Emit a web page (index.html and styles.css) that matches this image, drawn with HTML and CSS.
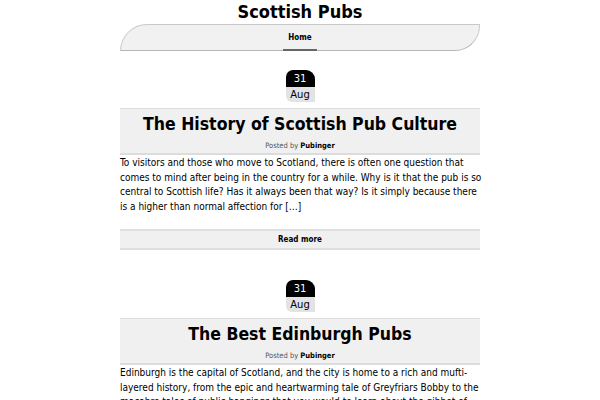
FILE: index.html
```html
<!DOCTYPE html>
<html lang="en">
<head>
<meta charset="utf-8">
<title>Scottish Pubs</title>
<link rel="stylesheet" href="styles.css">
</head>
<body>
<div class="page">
  <header class="site-header">
    <h1 class="site-title">Scottish Pubs</h1>
    <nav class="main-nav">
      <a class="nav-link active" href="#">Home</a>
    </nav>
  </header>

  <main class="posts">
    <article class="post">
      <div class="date">
        <span class="day">31</span>
        <span class="month">Aug</span>
      </div>
      <div class="post-head">
        <h2 class="post-title">The History of Scottish Pub Culture</h2>
        <div class="meta">Posted by <b>Pubinger</b></div>
      </div>
      <p class="excerpt">To visitors and those who move to Scotland, there is often one question that comes to mind after being in the country for a while. Why is it that the pub is so central to Scottish life? Has it always been that way? Is it simply because there is a higher than normal affection for […]</p>
      <a class="read-more" href="#">Read more</a>
    </article>

    <article class="post">
      <div class="date">
        <span class="day">31</span>
        <span class="month">Aug</span>
      </div>
      <div class="post-head">
        <h2 class="post-title">The Best Edinburgh Pubs</h2>
        <div class="meta">Posted by <b>Pubinger</b></div>
      </div>
      <p class="excerpt">Edinburgh is the capital of Scotland, and the city is home to a rich and mufti-layered history, from the epic and heartwarming tale of Greyfriars Bobby to the macabre tales of public hangings that you would to learn about the gibbet of murder and when the city was mostly</p>
      <a class="read-more" href="#">Read more</a>
    </article>
  </main>
</div>
</body>
</html>
```

FILE: styles.css
```css
html, body {
  margin: 0;
  padding: 0;
  background: #ffffff;
}
body {
  font-family: "DejaVu Sans Condensed", "DejaVu Sans", sans-serif;
  font-stretch: condensed;
  color: #000;
}
.page {
  width: 360px;
  margin: 0 auto;
}
.site-title {
  margin: 0;
  font-size: 18px;
  line-height: 24px;
  text-align: center;
  font-weight: bold;
  color: #000;
}
.main-nav {
  height: 25px;
  background: #f1f1f1;
  border: 1px solid #c9c9c9;
  border-bottom-color: #b5b5b5;
  border-radius: 28px 0 26px 0;
  display: flex;
  justify-content: center;
  align-items: stretch;
}
.nav-link {
  display: flex;
  align-items: center;
  padding: 0 5px;
  font-size: 8px;
  font-weight: bold;
  color: #000;
  text-decoration: none;
  border-bottom: 2px solid #666;
  margin-bottom: -1px;
}
.posts {
  display: flex;
  flex-direction: column;
}
.post {
  margin-top: 19px;
  display: flex;
  flex-direction: column;
}
.post + .post {
  margin-top: 30px;
}
.date {
  align-self: center;
  display: flex;
  flex-direction: column;
  width: 29px;
  font-family: "DejaVu Sans", sans-serif;
  font-stretch: normal;
  font-size: 10px;
  text-align: center;
}
.day {
  height: 17px;
  line-height: 18px;
  background: #000;
  color: #fff;
  border-radius: 7px 9px 0 0;
}
.month {
  height: 15px;
  line-height: 15px;
  background: #e3e3e3;
  color: #000;
  border-radius: 0 0 0 6px;
}
.post-head {
  margin-top: 6px;
  background: #f0f0f0;
  border-top: 1px solid #dcdcdc;
  border-bottom: 2px solid #dcdcdc;
  padding: 3px 0 1px;
  text-align: center;
}
.post-title {
  margin: 0 0 4px;
  font-size: 17.5px;
  line-height: 24px;
  font-weight: bold;
  color: #000;
}
.meta {
  font-size: 7.5px;
  line-height: 12px;
  color: #555;
}
.meta b {
  color: #000;
}
.excerpt {
  margin: 1px -6px 14px 0;
  font-size: 10px;
  line-height: 14.7px;
  color: #000;
}
.read-more {
  display: block;
  height: 17px;
  line-height: 17px;
  background: #f0f0f0;
  border-top: 2px solid #dedede;
  border-bottom: 2px solid #dedede;
  text-align: center;
  font-size: 8px;
  font-weight: bold;
  color: #000;
  text-decoration: none;
}
```
